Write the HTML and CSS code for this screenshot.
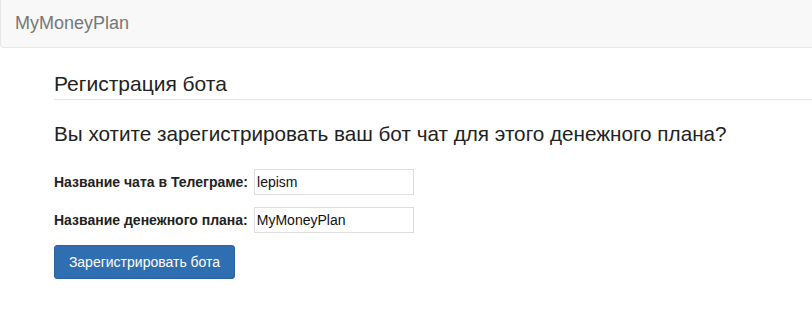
FILE: index.html
```html
<!DOCTYPE html>
<html>
<head>
<meta charset="utf-8">
<link rel="stylesheet" href="styles.css">
</head>
<body>
<nav class="navbar"><span class="brand">MyMoneyPlan</span></nav>
<main class="content">
  <h2 class="title">Регистрация бота</h2>
  <p class="question">Вы хотите зарегистрировать ваш бот чат для этого денежного плана?</p>
  <form class="form">
    <div class="row"><label class="label">Название чата в Телеграме:</label><input class="input" type="text" value="lepism"></div>
    <div class="row"><label class="label">Название денежного плана:</label><input class="input" type="text" value="MyMoneyPlan"></div>
    <button class="btn" type="button">Зарегистрировать бота</button>
  </form>
</main>
</body>
</html>
```
FILE: styles.css
```css
html, body { margin: 0; padding: 0; background: #fff; }
body { font-family: "Liberation Sans", Arial, sans-serif; color: #333; width: 812px; height: 310px; overflow: hidden; }
.navbar {
  height: 47px;
  background: #f8f8f8;
  border-bottom: 1px solid #e7e7e7;
  border-left: 1px solid #e7e7e7;
  border-bottom-left-radius: 4px;
  display: flex;
  align-items: center;
  padding-left: 14px;
  box-sizing: content-box;
}
.brand { font-size: 18px; color: #777; }
.content { padding-left: 54px; }
.title {
  margin: 22px 0 0 0;
  font-size: 21px;
  font-weight: normal;
  color: #222;
  line-height: 28px;
  padding-bottom: 1px;
  border-bottom: 1px solid #e2e2e2;
}
.question { margin: 20px 0 0 0; font-size: 20.7px; line-height: 28px; color: #222; }
.form { margin-top: 21px; display: flex; flex-direction: column; align-items: flex-start; }
.row { display: flex; align-items: center; height: 26px; margin-bottom: 12px; }
.label { font-weight: bold; font-size: 14px; color: #222; margin-right: 6px; }
.input {
  width: 160px; height: 26px; box-sizing: border-box;
  border: 1px solid #ddd; border-radius: 0;
  font-family: "Liberation Sans", Arial, sans-serif; font-size: 14px; color: #111;
  padding: 0 2px; margin: 0; outline: none;
}
.btn {
  margin-top: 0;
  width: 181px; height: 34px;
  background: #2f6eb0; color: #fff;
  border: 1px solid #2a62a0; border-radius: 3px;
  font-family: "Liberation Sans", Arial, sans-serif; font-size: 14px;
  padding: 0;
}
```
